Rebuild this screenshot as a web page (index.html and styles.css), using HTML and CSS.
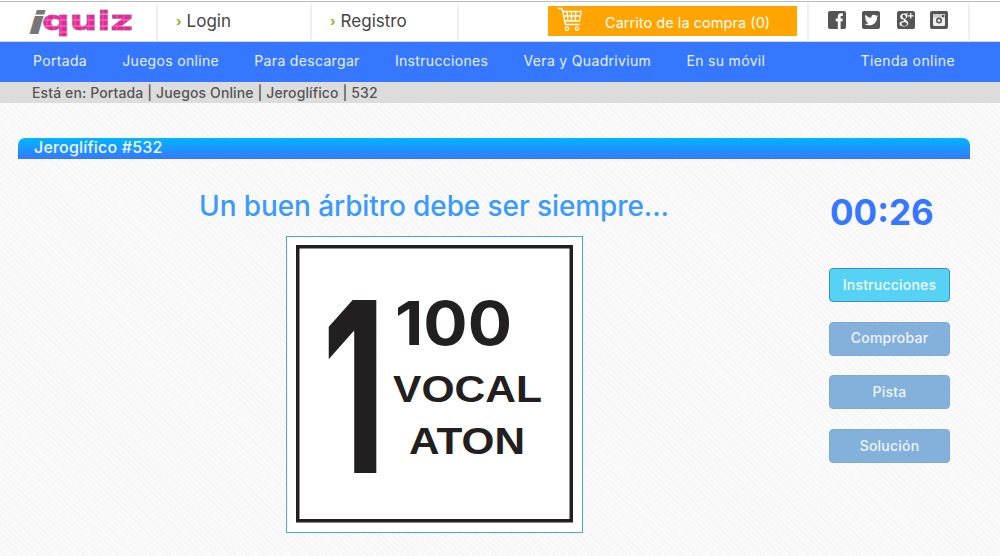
FILE: index.html
```html
<!DOCTYPE html>
<html lang="es">
<head>
<meta charset="utf-8">
<title>iQuiz - Jeroglífico #532</title>
<link rel="stylesheet" href="styles.css">
</head>
<body>
<header class="top">
  <div class="top-inner">
    <a class="logo-cell">
      <svg class="logo" width="110" height="32" viewBox="0 0 110 32">
        <defs>
          <pattern id="logo-grid" width="7" height="6" patternUnits="userSpaceOnUse">
            <rect width="7" height="6" fill="#e9259b"/>
            <rect y="4.500" width="7" height="1" fill="#f58acb"/>
            <rect x="5.500" width="1" height="6" fill="#f058b4"/>
          </pattern>
        </defs>
        <text class="logo-i" x="1" y="25" textLength="17" lengthAdjust="spacingAndGlyphs">i</text>
        <text class="logo-quiz" x="15" y="21" textLength="91" lengthAdjust="spacingAndGlyphs" fill="url(#logo-grid)">quiz</text>
      </svg>
    </a>
    <a class="top-link top-link-login"><span class="chev">›</span>Login</a>
    <a class="top-link top-link-reg"><span class="chev">›</span>Registro</a>
    <div class="cart-cell">
      <a class="cart">
        <svg class="cart-icon" width="26" height="25" viewBox="0 0 26 25" fill="none" stroke="#fff" stroke-width="1.3">
          <path d="M1 1.500h4l3.500 16h14"/>
          <path d="M5.600 4.500h18.600l-1.700 9.500H7.600"/>
          <path d="M10 4.500l1 9.500M14.500 4.500v9.500M19 4.500l-1 9.500M6.500 9h17"/>
          <circle cx="10" cy="21.500" r="1.700"/>
          <circle cx="20" cy="21.500" r="1.700"/>
        </svg>
        <span class="cart-text">Carrito de la compra (0)</span>
      </a>
    </div>
    <div class="social">
      <svg class="soc" width="18" height="18" viewBox="0 0 18 18"><rect width="18" height="18" rx="2" fill="#555"/><path fill="#fff" d="M9.800 18v-7.800H7.700V7.500h2.100V5.600C9.800 3.300 11 2.200 13 2.200h1.800v2.700h-1.100c-.9 0-1.100.4-1.100 1.100v1.500h2.200l-.3 2.700h-1.900V18z"/></svg>
      <svg class="soc soc-tw" width="18" height="18" viewBox="0 0 18 18"><rect width="18" height="18" rx="2" fill="#555"/><path fill="#fff" d="M15.500 4.900c-.5.200-1 .4-1.500.4.500-.3 1-.8 1.200-1.400-.5.300-1.100.5-1.700.7-1.700-1.800-4.600-.2-4.100 2.100C7.200 6.600 5 5.500 3.500 3.700c-.8 1.300-.4 3 .8 3.800-.4 0-.9-.1-1.200-.3 0 1.300.9 2.500 2.200 2.700-.4.100-.8.100-1.200.1.400 1.100 1.400 1.800 2.500 1.900-1.100.9-2.600 1.300-4 1.100 5.900 3.500 12.900-.5 12.500-7 .6-.4 1-.9 1.400-1.500-.1 0-.3-.1-1 0z"/></svg>
      <svg class="soc soc-gp" width="18" height="18" viewBox="0 0 18 18"><rect width="18" height="18" rx="2" fill="#555"/><path fill="#fff" d="M7.200 2.500c-2.300 0-4 1.300-4 3.200 0 1.700 1.300 2.800 3.100 2.800h.5c-.2.400-.2.900.2 1.400-2.300.1-4.500.9-4.500 2.900 0 1.800 2 2.700 4.300 2.700 2.700 0 4.500-1.400 4.500-3.200 0-2.400-3-2.900-3-4 0-.9 2.300-1.300 2.300-3.700 0-.8-.4-1.400-.9-1.700h1l1-.4zM6.800 3.500c1.100 0 1.900 1.200 2 2.400.1 1.100-.5 1.800-1.400 1.800-1.100 0-1.900-1.200-2-2.400-.1-1.100.5-1.800 1.400-1.800zm.5 7.500c1.600.1 2.700 1 2.700 2.100 0 1-.9 1.800-2.500 1.800-1.700 0-3-.8-3-2 0-1.200 1.200-1.900 2.800-1.900z"/><path fill="#fff" d="M13.200 2h1.200v2.200h2.100v1.200h-2.100v2.200h-1.200V5.400h-2.100V4.200h2.100z"/></svg>
      <svg class="soc" width="18" height="18" viewBox="0 0 18 18"><rect width="18" height="18" rx="2" fill="#555"/><rect x="3" y="3" width="12" height="12" rx="1.500" fill="#eee"/><rect x="3" y="3" width="12" height="3.500" fill="#ccc"/><circle cx="9" cy="9.500" r="3" fill="#555"/><circle cx="9" cy="9.500" r="1.500" fill="#ddd"/><rect x="12" y="4" width="2.200" height="2.200" fill="#555"/></svg>
    </div>
  </div>
</header>
<nav class="nav">
  <a>Portada</a>
  <a>Juegos online</a>
  <a>Para descargar</a>
  <a>Instrucciones</a>
  <a>Vera y Quadrivium</a>
  <a>En su móvil</a>
  <a class="nav-end">Tienda online</a>
</nav>
<div class="crumbs">Está en: Portada | Juegos Online | Jeroglífico | 532</div>
<main class="main">
  <h1 class="bar">Jeroglífico #532</h1>
  <div class="game">
    <section class="puzzle">
      <h2 class="question">Un buen árbitro debe ser siempre...</h2>
      <div class="frame">
        <svg class="sign" width="295" height="295" viewBox="0 0 295 295">
          <rect x="10.750" y="9.750" width="273.500" height="274" fill="#fff" stroke="#231f20" stroke-width="3.500"/>
          <text class="big-one" x="35" y="236" textLength="64" lengthAdjust="spacingAndGlyphs">1</text>
          <text class="sign-num" x="108" y="108" textLength="117" lengthAdjust="spacingAndGlyphs">100</text>
          <text class="sign-word" x="106" y="165" textLength="149" lengthAdjust="spacingAndGlyphs">VOCAL</text>
          <text class="sign-word" x="122" y="217" textLength="116" lengthAdjust="spacingAndGlyphs">ATON</text>
        </svg>
      </div>
    </section>
    <aside class="side">
      <div class="timer">00:26</div>
      <a class="btn btn-on">Instrucciones</a>
      <a class="btn">Comprobar</a>
      <a class="btn">Pista</a>
      <a class="btn">Solución</a>
    </aside>
  </div>
</main>
</body>
</html>
```
FILE: styles.css
```css
* { box-sizing: border-box; }
html, body { margin: 0; padding: 0; height: 556px; overflow: hidden; }
body {
  font-family: Inter, "Open Sans", sans-serif;
  background-color: #f9f9f9;
  background-image:
    repeating-linear-gradient(45deg, #f5f5f5 0 1px, transparent 1px 4px),
    repeating-linear-gradient(-35deg, #fcfcfc 0 1px, transparent 1px 5px);
}
.top { background: #fff; padding-top: 1px; height: 42px; border-bottom: 1px solid #d5d5d5; }
.top-inner { display: flex; height: 40px; border-top: 1px solid #bdbdbd; }
.logo-cell { width: 156px; padding: 7px 0 0 27px; }
.logo { display: block; }
.logo-i { font: italic 700 32px "DejaVu Sans", sans-serif; fill: #777; }
.logo-quiz { font: 700 26px "DejaVu Sans", sans-serif; stroke: #999; stroke-width: 1; paint-order: stroke; }
.top-link { display: flex; align-items: center; border-left: 2px solid #efefef; padding-left: 18px; font-size: 17px; color: #444; padding-bottom: 4px; margin-top: 2px; }
.top-link-login { width: 154px; }
.top-link-reg { width: 147px; }
.chev { color: #8ab41e; font-size: 13px; margin-right: 5px; font-weight: 700; }
.cart-cell { flex: none; width: 350px; border-left: 2px solid #efefef; margin-top: 2px; padding: 2px 0 0 89px; }
.cart { display: flex; align-items: center; width: 249px; height: 30px; background: #ffa400; padding-left: 9px; padding-top: 3px; color: #fff; }
.cart-icon { flex: none; margin-top: -6px; }
.cart-text { margin-left: 22px; font-size: 14.600px; white-space: nowrap; }
.social { width: 163px; height: 38px; margin-top: 2px; border-left: 2px solid #efefef; border-right: 2px solid #efefef; display: flex; gap: 16px; padding: 7px 0 0 19px; }
.soc { display: block; flex: none; }
.soc-gp { margin-left: 1px; margin-right: -1px; }
.nav { display: flex; align-items: center; height: 40px; background: #3578ff; padding: 0 45px 4px 33px; gap: 35.200px; font-size: 14px; letter-spacing: .33px; color: #e6efff; }
.nav-end { margin-left: auto; letter-spacing: .42px; }
.crumbs { height: 21px; background: #dcdcdc; padding-left: 32px; font-size: 14px; font-weight: 500; line-height: 21px; letter-spacing: .12px; color: #555; }
.main { padding: 35px 30px 0 18px; }
.bar { margin: 0; height: 21px; border-radius: 7px 7px 0 0; background: linear-gradient(#00b6ff, #3578ff); padding-left: 16px; font-size: 16px; font-weight: 500; line-height: 19px; letter-spacing: .2px; color: #eef4ff; }
.game { display: flex; }
.puzzle { width: 730px; margin-left: 51px; display: flex; flex-direction: column; align-items: center; padding-top: 31px; }
.question { margin: 0 0 13px; font-size: 28px; font-weight: 500; line-height: 33px; letter-spacing: -.1px; color: #3a9bff; white-space: nowrap; }
.frame { width: 297px; height: 297px; border: 1px solid #4aa0ff; background: #fff; }
.sign { display: block; }
.big-one { font: 700 238px Inter, sans-serif; fill: #231f20; }
.sign-num { font: 700 60px Inter, sans-serif; fill: #231f20; }
.sign-word { font: 700 37px "Liberation Sans", sans-serif; fill: #231f20; }
.side { width: 121px; margin-left: 30px; padding-top: 33px; display: flex; flex-direction: column; }
.timer { font-size: 35px; font-weight: 700; line-height: 40px; color: #3578ff; padding-left: 1px; margin-bottom: 36px; white-space: nowrap; }
.btn { display: flex; align-items: center; justify-content: center; height: 34px; padding-bottom: 2px; margin-bottom: 19.700px; border-radius: 4px; background: #84b1db; border: 1px solid #7eabd6; letter-spacing: .22px; color: #eef4fb; font-size: 14px; font-weight: 500; }
.btn-on { background: #56d2f5; border-color: #3d8fc9; color: #f2fbff; }
```
